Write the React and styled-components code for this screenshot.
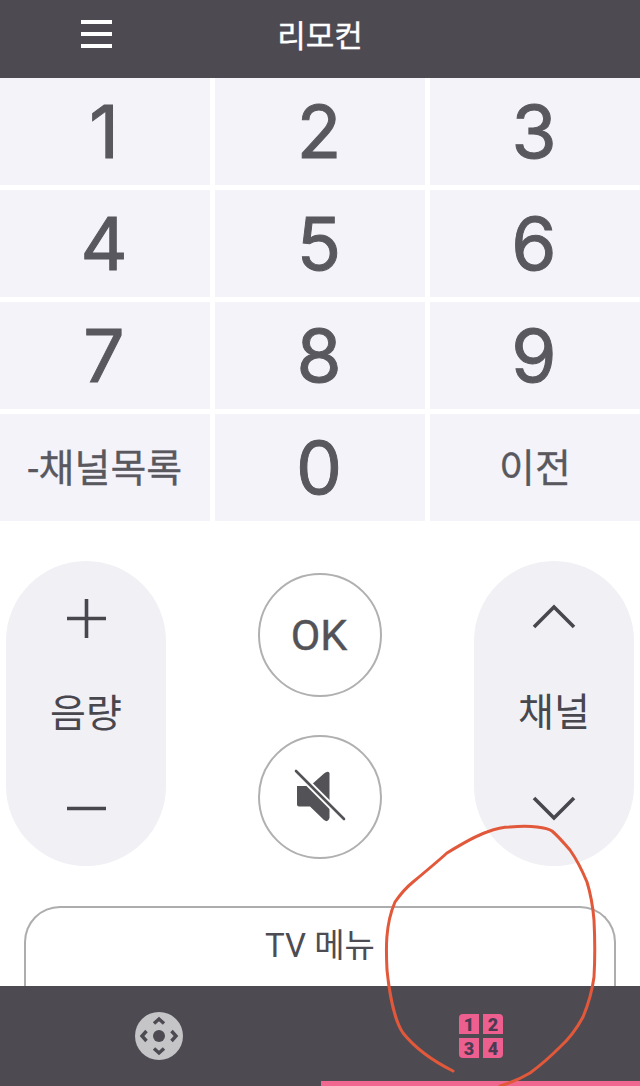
import React from "react";
import styled, { createGlobalStyle } from "styled-components";

const KOREAN = `Roboto, "Noto Sans CJK KR", sans-serif`;

const GlobalStyle = createGlobalStyle`
  html, body {
    margin: 0;
    padding: 0;
    background: #fff;
  }
`;

const Page = styled.div`
  position: relative;
  width: 640px;
  height: 1086px;
  display: flex;
  flex-direction: column;
  overflow: hidden;
  font-family: ${KOREAN};
  background: #fff;
`;

const Header = styled.header`
  position: relative;
  flex: 0 0 78px;
  display: flex;
  align-items: center;
  justify-content: center;
  background: #4d4a52;
`;

const Menu = styled.div`
  position: absolute;
  left: 81px;
  top: 20px;
  width: 31px;
  height: 28px;
  display: flex;
  flex-direction: column;
  justify-content: space-between;

  span {
    display: block;
    height: 4px;
    background: #fff;
  }
`;

const Title = styled.h1`
  margin: -12px 0 0;
  font-size: 31px;
  font-weight: 400;
  color: #fff;
  -webkit-text-stroke: 0.4px #fff;
`;

const Keypad = styled.div`
  display: grid;
  grid-template-columns: 210px 210px 210px;
  grid-auto-rows: 107px;
  gap: 5px;
`;

const Key = styled.button`
  display: flex;
  align-items: center;
  justify-content: center;
  padding: ${(p) => (p.$text ? "0 0 6px" : "0 2px 0 0")};
  border: 0;
  background: #f3f3f9;
  color: #59585e;
  font-family: ${(p) => (p.$text ? KOREAN : "Inter, sans-serif")};
  font-size: ${(p) => (p.$text ? "39px" : "73px")};
  font-weight: 400;
  -webkit-text-stroke: ${(p) => (p.$text ? "0.3px" : "1px")} #59585e;
`;

const Controls = styled.section`
  display: flex;
  justify-content: space-between;
  padding: 40px 6px 0;
`;

const Pill = styled.div`
  width: 160px;
  height: 305px;
  display: flex;
  flex-direction: column;
  align-items: center;
  justify-content: space-between;
  padding: 38px 0 38px;
  box-sizing: border-box;
  border-radius: 80px;
  background: #f0f0f5;
  color: #49474e;
`;

const PillLabel = styled.span`
  font-size: 39px;
  line-height: 50px;
  color: #49474e;
`;

const Center = styled.div`
  display: flex;
  flex-direction: column;
  gap: 38px;
  padding-top: 12px;
`;

const Round = styled.button`
  width: 124px;
  height: 124px;
  display: flex;
  align-items: center;
  justify-content: center;
  padding: ${(p) => (p.$text ? "0 2px 0 0" : "0")};
  box-sizing: border-box;
  border: 2px solid #b0b0b0;
  border-radius: 50%;
  background: #fff;
  color: #535257;
  font-family: ${KOREAN};
  font-size: 43px;
  -webkit-text-stroke: 0.4px #535257;
`;

const TvMenu = styled.div`
  flex: 1;
  min-height: 0;
  margin: 40px 24px 0;
  padding-top: 18px;
  box-sizing: border-box;
  border: 2px solid #adadad;
  border-bottom: 0;
  border-radius: 36px 36px 0 0;
  text-align: center;
  font-size: 33px;
  line-height: 40px;
  color: #4d4c52;
`;

const TabBar = styled.nav`
  flex: 0 0 100px;
  display: grid;
  grid-template-columns: 321px 319px;
  background: #4d4a52;
`;

const Tab = styled.div`
  display: flex;
  align-items: flex-start;
  justify-content: center;
  box-sizing: border-box;
  padding-top: ${(p) => (p.$active ? "28px" : "26px")};
  padding-right: ${(p) => (p.$active ? "0" : "4px")};
  border-bottom: ${(p) => (p.$active ? "5px solid #f0678f" : "0")};
`;

const NumberGrid = styled.div`
  display: grid;
  grid-template-columns: 20px 20px;
  grid-auto-rows: 20px;
  gap: 4px;
  margin-left: 1px;
`;

const NumberTile = styled.span`
  display: flex;
  align-items: center;
  justify-content: center;
  background: #ec5f8f;
  color: #4d3a52;
  font-family: Roboto, sans-serif;
  font-size: 18px;
  font-weight: 900;
  border-radius: ${(p) => p.$corner};
`;

const Annotation = styled.svg`
  position: absolute;
  inset: 0;
  pointer-events: none;
`;

const ChevronIcon = styled.svg`
  margin: ${(p) => (p.$down ? "0 0 7px" : "5px 0 0")};
`;

const Plus = () => (
  <svg width="39" height="39" viewBox="0 0 39 39">
    <path d="M0 19.5H39M19.5 0V39" stroke="#49474e" strokeWidth="3.6" fill="none" />
  </svg>
);

const Minus = () => (
  <svg width="39" height="39" viewBox="0 0 39 39">
    <path d="M0 19.5H39" stroke="#49474e" strokeWidth="3.6" fill="none" />
  </svg>
);

const Chevron = ({ down }) => (
  <ChevronIcon $down={down} width="44" height="26" viewBox="0 0 44 26">
    <path
      d={down ? "M2 3L22 23L42 3" : "M2 23L22 3L42 23"}
      stroke="#49474e"
      strokeWidth="3.6"
      fill="none"
    />
  </ChevronIcon>
);

const Mute = () => (
  <svg width="60" height="60" viewBox="0 0 60 60">
    <path
      d="M7 19H20L34 6.5Q38 3.5 39.500 6V51Q38 56 34 53L20 39.500H9Q7 39.500 7 37.500Z"
      fill="#535257"
    />
    <path d="M5 3L53 51" stroke="#fff" strokeWidth="6.500" fill="none" />
    <path d="M6 4L54 52" stroke="#535257" strokeWidth="2.600" strokeLinecap="round" fill="none" />
  </svg>
);

const Dpad = () => (
  <svg width="48" height="48" viewBox="0 0 48 48">
    <circle cx="24" cy="24" r="24" fill="#c5c4c7" />
    <circle cx="24" cy="24" r="6" fill="#4d4a52" />
    <path
      d="M19 11.500L24 7L29 11.500M19 36.500L24 41L29 36.500M11.500 19L7 24L11.500 29M36.500 19L41 24L36.500 29"
      stroke="#4d4a52"
      strokeWidth="3.400"
      fill="none"
    />
  </svg>
);

const KEYS = ["1", "2", "3", "4", "5", "6", "7", "8", "9", "-채널목록", "0", "이전"];
const TILES = [
  ["1", "4px 0 0 0"],
  ["2", "0 4px 0 0"],
  ["3", "0 0 0 4px"],
  ["4", "0 0 4px 0"],
];

const App = () => {
  return (
    <Page>
      <GlobalStyle />
      <Header>
        <Menu>
          <span />
          <span />
          <span />
        </Menu>
        <Title>리모컨</Title>
      </Header>

      <Keypad>
        {KEYS.map((k) => (
          <Key key={k} $text={k.length > 1}>
            {k}
          </Key>
        ))}
      </Keypad>

      <Controls>
        <Pill>
          <Plus />
          <PillLabel>음량</PillLabel>
          <Minus />
        </Pill>
        <Center>
          <Round $text>OK</Round>
          <Round>
            <Mute />
          </Round>
        </Center>
        <Pill>
          <Chevron />
          <PillLabel>채널</PillLabel>
          <Chevron down />
        </Pill>
      </Controls>

      <TvMenu>TV 메뉴</TvMenu>

      <TabBar>
        <Tab>
          <Dpad />
        </Tab>
        <Tab $active>
          <NumberGrid>
            {TILES.map(([n, corner]) => (
              <NumberTile key={n} $corner={corner}>
                {n}
              </NumberTile>
            ))}
          </NumberGrid>
        </Tab>
      </TabBar>

      {/* red pen circle drawn on top of the screenshot */}
      <Annotation width="640" height="1086" viewBox="0 0 640 1086">
        <path
          d="M453 1071C435 1062 415 1048 403 1033C394 1020 389 990 387 970C386 950 385 925 395 902C402 892 408 886 413 882C425 872 437 862 447 853C460 845 475 836 487 832C495 829 502 827 510 827C520 826 530 826 537 827C545 828 549 829 552 831C558 836 564 843 570 850C577 860 582 870 587 882C591 895 593 908 594 920C595 940 595 960 594 977C592 992 588 1005 583 1017C577 1028 570 1038 560 1047C550 1057 541 1065 530 1073C520 1079 510 1083 500 1086"
          fill="none"
          stroke="#e2583a"
          strokeWidth="3"
          strokeLinecap="round"
        />
      </Annotation>
    </Page>
  );
};

export default App;
